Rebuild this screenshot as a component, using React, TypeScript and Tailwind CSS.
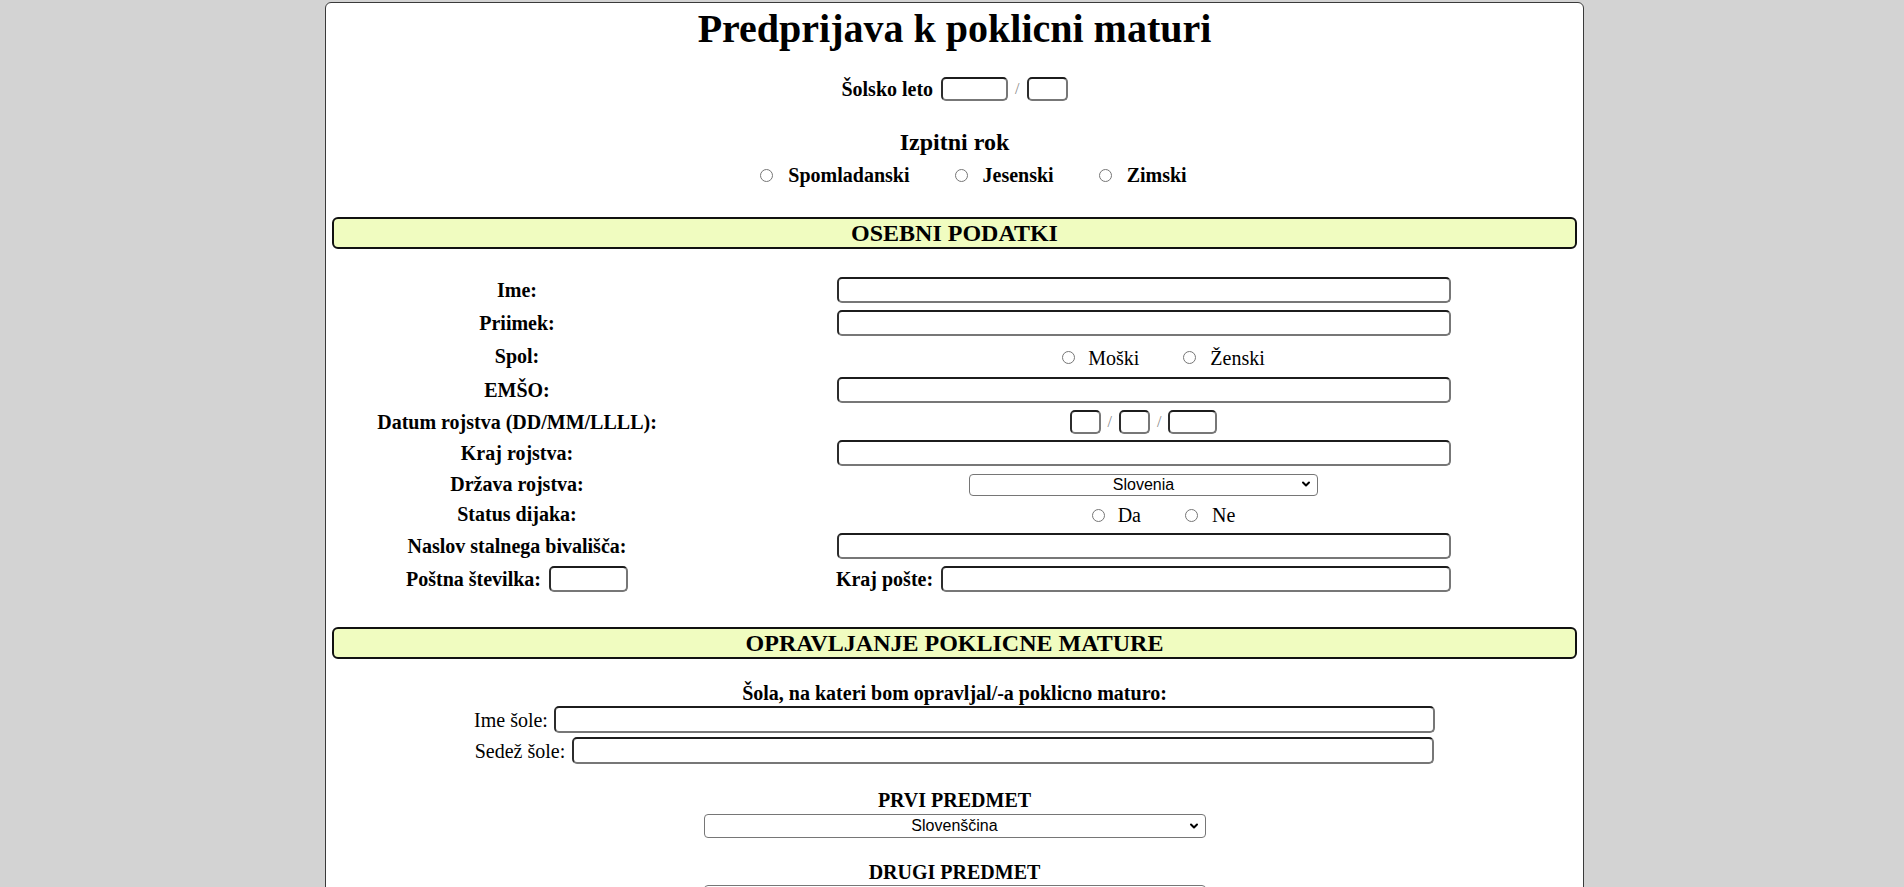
import { ChevronDown } from "lucide-react";

const serif = "font-['Liberation_Serif','Times_New_Roman',serif]";

function TextInput({ className = "" }: { className?: string }) {
  return (
    <input
      type="text"
      className={`block shrink-0 rounded-[5px] border-2 border-t-[#1c1c1c] border-l-[#2c2c2c] border-r-[#777777] border-b-[#777777] bg-white outline-none ${className}`}
    />
  );
}

function Slash() {
  return <span className="mx-[7px] text-[16px] leading-none text-[#888]">/</span>;
}

function Radio({ name, label, bold = false, gap = "ml-[15px]", after = "" }: { name: string; label: string; bold?: boolean; gap?: string; after?: string }) {
  return (
    <label className={`flex items-center ${after}`}>
      <input type="radio" name={name} className="m-0 h-[13px] w-[13px] shrink-0" />
      <span className={`${gap} text-[20px] leading-[24px] ${bold ? "font-bold" : ""}`}>{label}</span>
    </label>
  );
}

function Select({ value, className = "" }: { value: string; className?: string }) {
  return (
    <div className={`relative ${className}`}>
      <select className="h-full w-full appearance-none rounded-[4px] border border-[#767676] bg-white text-center [text-align-last:center] font-['Liberation_Sans',Arial,sans-serif] text-[16px] leading-none text-black outline-none">
        <option>{value}</option>
      </select>
      <ChevronDown className="pointer-events-none absolute right-[6px] top-1/2 h-[12px] w-[12px] -translate-y-1/2 text-black" strokeWidth={4} />
    </div>
  );
}

function Header({ title, className = "" }: { title: string; className?: string }) {
  return (
    <div className={`mx-[6px] flex h-[32px] items-center justify-center rounded-[6px] border-2 border-[#111] bg-[#f0fcc0] text-[24px] font-bold leading-none ${className}`}>
      {title}
    </div>
  );
}

function Row({ label, h, children }: { label: React.ReactNode; h: string; children: React.ReactNode }) {
  return (
    <div className={`grid grid-cols-[378px_1fr] items-center ${h}`}>
      <div className="flex items-center justify-center text-center text-[20px] font-bold leading-[24px]">{label}</div>
      <div className="flex items-center justify-center">{children}</div>
    </div>
  );
}

export default function App() {
  return (
    <div className={`flex min-h-screen justify-center bg-[#d3d3d3] pl-[5px] pt-[2px] text-black ${serif}`}>
      <div className="w-[1259px] rounded-[6px] border border-[#3a3a3a] bg-white pb-[60px]">
        <h1 className="mt-[3px] h-[46px] text-center text-[40px] font-bold leading-[46px]">Predprijava k poklicni maturi</h1>

        <div className="mt-[25px] flex h-[24px] items-center justify-center">
          <span className="text-[20px] font-bold">Šolsko leto</span>
          <TextInput className="ml-[8px] h-[24px] w-[67px]" />
          <Slash />
          <TextInput className="h-[24px] w-[41px]" />
        </div>

        <h3 className="mt-[27px] text-center text-[24px] font-bold leading-[28px]">Izpitni rok</h3>
        <div className="mt-[7px] flex h-[24px] items-center justify-center pl-[38px]">
          <Radio name="rok" label="Spomladanski" bold after="mr-[45px]" />
          <Radio name="rok" label="Jesenski" bold after="mr-[45px]" />
          <Radio name="rok" label="Zimski" bold />
        </div>

        <Header title="OSEBNI PODATKI" className="mt-[30px]" />

        <div className="mx-[2px] mt-[24px]">
          <Row label="Ime:" h="h-[33px]">
            <TextInput className="h-[26px] w-[614px]" />
          </Row>
          <Row label="Priimek:" h="h-[33px]">
            <TextInput className="h-[26px] w-[614px]" />
          </Row>
          <Row label="Spol:" h="h-[34px]">
            <div className="flex items-center pl-[40px] pt-[3px]">
              <Radio name="spol" label="Moški" gap="ml-[13px]" after="mr-[44px]" />
              <Radio name="spol" label="Ženski" gap="ml-[14px]" />
            </div>
          </Row>
          <Row label="EMŠO:" h="h-[33px]">
            <TextInput className="h-[26px] w-[614px]" />
          </Row>
          <Row label="Datum rojstva (DD/MM/LLLL):" h="h-[31px]">
            <TextInput className="h-[24px] w-[31px]" />
            <Slash />
            <TextInput className="h-[24px] w-[31px]" />
            <Slash />
            <TextInput className="h-[24px] w-[49px]" />
          </Row>
          <Row label="Kraj rojstva:" h="h-[32px]">
            <TextInput className="h-[26px] w-[614px]" />
          </Row>
          <Row label="Država rojstva:" h="h-[29px]">
            <Select value="Slovenia" className="h-[22px] w-[349px]" />
          </Row>
          <Row label="Status dijaka:" h="h-[31px]">
            <div className="flex items-center pl-[40px] pt-[3px]">
              <Radio name="status" label="Da" gap="ml-[13px]" after="mr-[44px]" />
              <Radio name="status" label="Ne" gap="ml-[14px]" />
            </div>
          </Row>
          <Row label="Naslov stalnega bivališča:" h="h-[33px]">
            <TextInput className="h-[26px] w-[614px]" />
          </Row>
          <Row
            label={
              <>
                <span>Poštna številka:</span>
                <TextInput className="ml-[8px] h-[26px] w-[79px]" />
              </>
            }
            h="h-[33px]"
          >
            <span className="text-[20px] font-bold">Kraj pošte:</span>
            <TextInput className="ml-[8px] h-[26px] w-[510px]" />
          </Row>
        </div>

        <Header title="OPRAVLJANJE POKLICNE MATURE" className="mt-[32px]" />

        <p className="mt-[23px] text-center text-[20px] font-bold leading-[23px]">Šola, na kateri bom opravljal/-a poklicno maturo:</p>
        <div className="mt-[1px] flex h-[27px] items-center justify-center">
          <span className="text-[20px]">Ime šole:</span>
          <TextInput className="ml-[6px] h-[27px] w-[881px]" />
        </div>
        <div className="mt-[4px] flex h-[27px] items-center justify-center">
          <span className="text-[20px]">Sedež šole:</span>
          <TextInput className="ml-[7px] h-[27px] w-[862px]" />
        </div>

        <p className="mt-[25px] text-center text-[20px] font-bold leading-[23px]">PRVI PREDMET</p>
        <div className="mt-[2px] flex justify-center">
          <Select value="Slovenščina" className="h-[24px] w-[502px]" />
        </div>

        <p className="mt-[23px] text-center text-[20px] font-bold leading-[23px]">DRUGI PREDMET</p>
        <div className="mt-[1px] flex justify-center">
          <Select value="Matematika" className="h-[24px] w-[502px]" />
        </div>

        <p className="mt-[23px] text-center text-[20px] font-bold leading-[23px]">TRETJI PREDMET</p>
        <div className="mt-[1px] flex justify-center">
          <Select value="Strokovni predmet" className="h-[24px] w-[502px]" />
        </div>
      </div>
    </div>
  );
}
